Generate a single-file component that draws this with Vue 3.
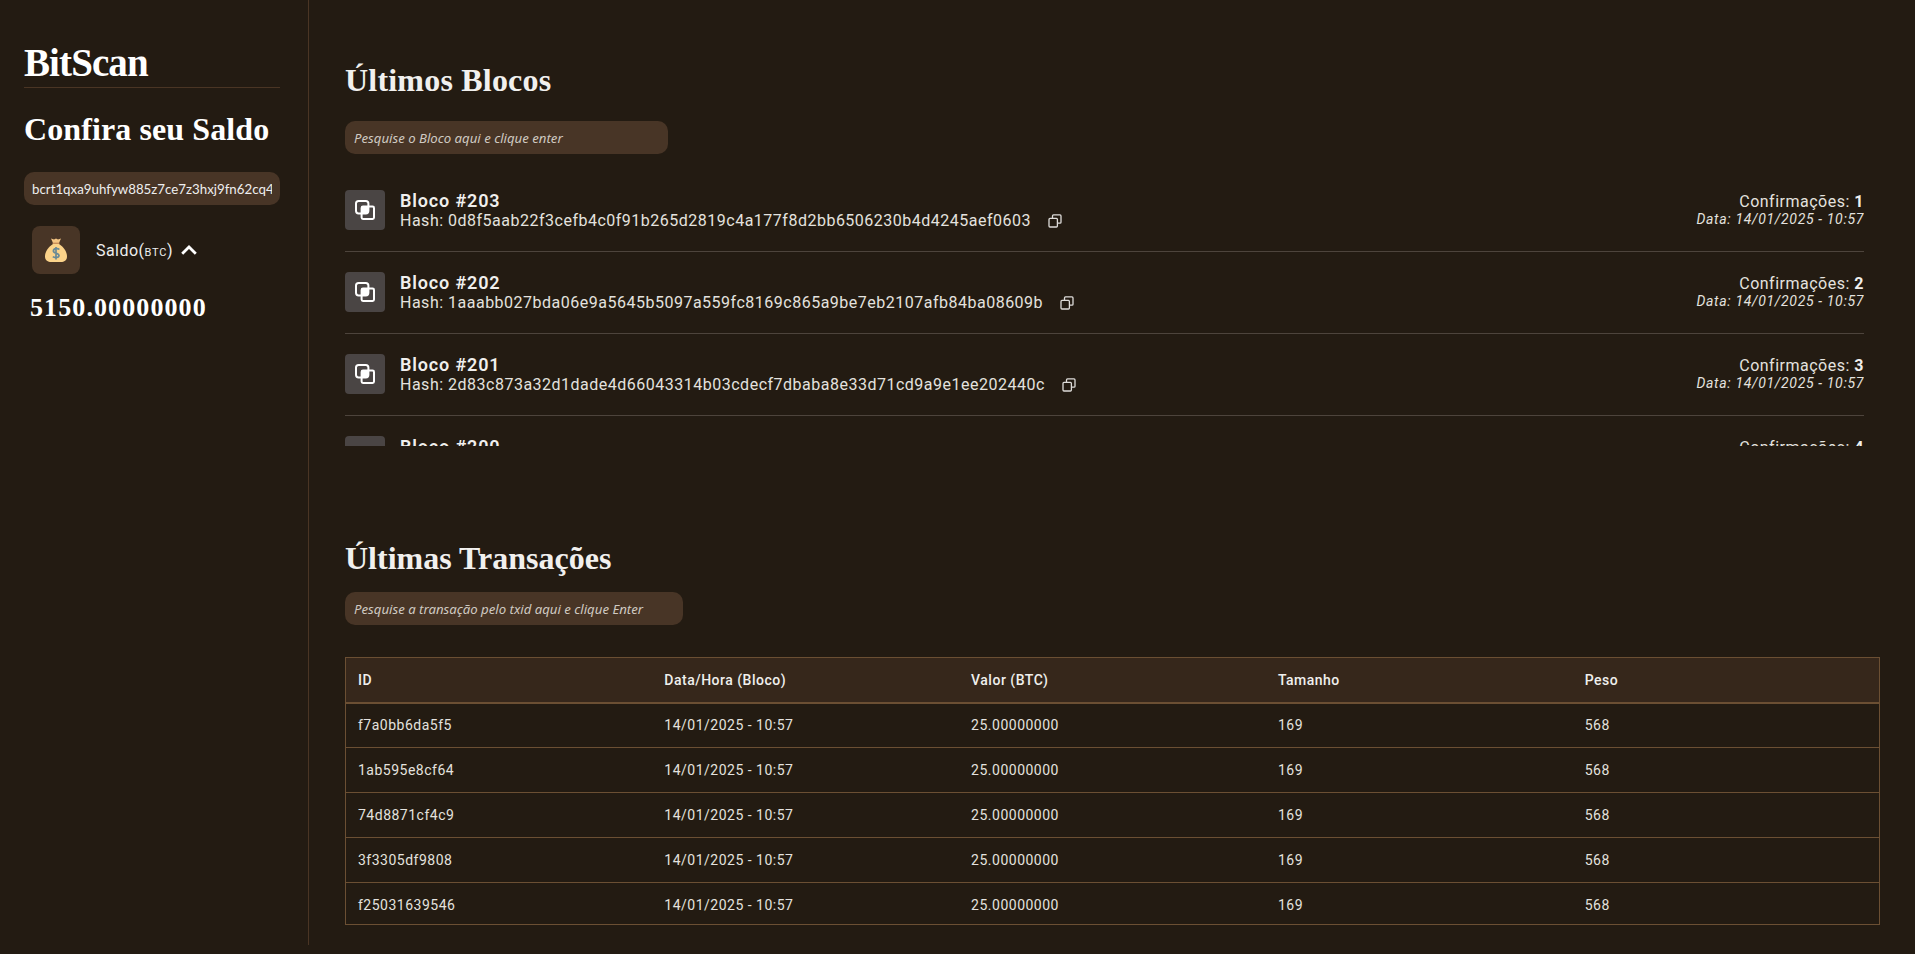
<template>
  <div class="page">
    <!-- sidebar -->
    <aside class="sidebar">
      <h1 class="logo">BitScan</h1>
      <h2 class="side-title">Confira seu Saldo</h2>
      <input class="address" type="text" :value="address" />
      <div class="balance-row">
        <div class="bag-tile">
          <svg width="24" height="26" viewBox="0 0 24 26">
            <path d="M7 1.5 L10 2.6 L12 1.5 L14 2.6 L17 1.5 L15 6 L9 6 Z" fill="#f5c684" />
            <rect x="8.6" y="5.6" width="6.8" height="1.6" fill="#c98f5a" />
            <path d="M9 7 C4 10 1 15 1 19.5 C1 23.5 4 25 7 25 L17 25 C20 25 23 23.5 23 19.5 C23 15 20 10 15 7 Z" fill="#fbd38a" />
            <path d="M15.4 12.5 C14 11.2 9.4 11.2 9.4 14 C9.4 16.8 15 15.6 15 18.6 C15 21 10.6 21 8.8 19.6 M12 10 L12 22.4" fill="none" stroke="#6a8a96" stroke-width="1.7" />
          </svg>
        </div>
        <span class="balance-label">Saldo(<small>BTC</small>)</span>
        <svg class="chevron" width="16" height="16" viewBox="0 0 16 16">
          <path d="M1.2 11.8 L8 5 L14.8 11.8" fill="none" stroke="#fff" stroke-width="2.8" />
        </svg>
      </div>
      <div class="balance-value">5150.00000000</div>
    </aside>

    <main class="content">
      <!-- blocos -->
      <section class="blocks">
        <h2 class="section-title">Últimos Blocos</h2>
        <input class="search" type="text" placeholder="Pesquise o Bloco aqui e clique enter" />
        <div class="block-list">
          <div v-for="b in blocks" :key="b.number" class="block-row">
            <div class="block-icon">
              <svg width="22" height="22" viewBox="0 0 22 22">
                <rect x="2" y="2" width="12.4" height="12.4" rx="2.6" fill="none" stroke="#fff" stroke-width="2" />
                <rect x="7.6" y="7.6" width="12.4" height="12.4" rx="1.4" fill="none" stroke="#fff" stroke-width="2" />
                <rect x="8" y="8" width="6" height="6" fill="#fff" />
              </svg>
            </div>
            <div class="block-main">
              <div class="block-name">Bloco #{{ b.number }}</div>
              <div class="block-hash">
                <span>Hash: {{ b.hash }}</span>
                <svg class="copy" width="14" height="14" viewBox="0 0 14 14">
                  <path d="M4.5 4 V1.9 A1 1 0 0 1 5.5 0.9 H12 A1 1 0 0 1 13 1.9 V8.2 A1 1 0 0 1 12 9.2 H9.6" fill="none" stroke="#dedcd9" stroke-width="1.3" />
                  <rect x="1" y="4.4" width="8.4" height="8.6" rx="1" fill="none" stroke="#dedcd9" stroke-width="1.3" />
                </svg>
              </div>
            </div>
            <div class="block-meta">
              <div class="confirm">Confirmações: <b>{{ b.confirmations }}</b></div>
              <div class="date">Data: 14/01/2025 - 10:57</div>
            </div>
          </div>
        </div>
      </section>

      <!-- transacoes -->
      <section class="transactions">
        <h2 class="section-title">Últimas Transações</h2>
        <input class="search search-tx" type="text" placeholder="Pesquise a transação pelo txid aqui e clique Enter" />
        <table class="tx-table">
          <thead>
            <tr>
              <th>ID</th>
              <th>Data/Hora (Bloco)</th>
              <th>Valor (BTC)</th>
              <th>Tamanho</th>
              <th>Peso</th>
            </tr>
          </thead>
          <tbody>
            <tr v-for="id in txs" :key="id">
              <td>{{ id }}</td>
              <td>14/01/2025 - 10:57</td>
              <td>25.00000000</td>
              <td>169</td>
              <td>568</td>
            </tr>
          </tbody>
        </table>
      </section>
    </main>
  </div>
</template>

<script setup>
const address = 'bcrt1qxa9uhfyw885z7ce7z3hxj9fn62cq45hm8ldy0k'

const blocks = [
  { number: 203, confirmations: 1, hash: '0d8f5aab22f3cefb4c0f91b265d2819c4a177f8d2bb6506230b4d4245aef0603' },
  { number: 202, confirmations: 2, hash: '1aaabb027bda06e9a5645b5097a559fc8169c865a9be7eb2107afb84ba08609b' },
  { number: 201, confirmations: 3, hash: '2d83c873a32d1dade4d66043314b03cdecf7dbaba8e33d71cd9a9e1ee202440c' },
  { number: 200, confirmations: 4, hash: '5e21a7c0f3b94d6688c1e07fa2d35b19c47e80d6f2a1b3947c5d08e6a1f3724b' }
]

const txs = ['f7a0bb6da5f5', '1ab595e8cf64', '74d8871cf4c9', '3f3305df9808', 'f25031639546']
</script>

<style>
body {
  background: #231b12;
}
</style>

<style scoped>
* {
  box-sizing: border-box;
  margin: 0;
}

.page {
  display: flex;
  height: 954px;
  overflow: hidden;
  background: #231b12;
  color: #fff;
  font-family: Roboto, sans-serif;
}

/* sidebar */
.sidebar {
  width: 309px;
  height: 945px;
  flex-shrink: 0;
  padding: 40px 28px 0 24px;
  border-right: 1px solid #4a3524;
}

.logo {
  font-family: "Liberation Serif", serif;
  font-size: 39px;
  line-height: 46px;
  font-weight: 700;
  letter-spacing: -0.9px;
  padding-bottom: 1px;
  border-bottom: 1px solid #4a3524;
}

.side-title {
  font-family: "Liberation Serif", serif;
  font-size: 32px;
  line-height: 40px;
  font-weight: 700;
  margin-top: 21px;
  letter-spacing: 0.1px;
}

.address {
  display: block;
  width: 100%;
  height: 33px;
  margin-top: 23px;
  padding: 0 8px;
  border: none;
  outline: none;
  border-radius: 10px;
  background: #483526;
  color: #eee;
  font-family: Lato, sans-serif;
  font-size: 13.3px;
}

.balance-row {
  display: flex;
  align-items: center;
  margin-top: 21px;
  padding-left: 8px;
}

.bag-tile {
  display: flex;
  align-items: center;
  justify-content: center;
  width: 48px;
  height: 48px;
  border-radius: 8px;
  background: #483526;
}

.balance-label {
  margin-left: 16px;
  font-size: 16px;
  letter-spacing: 0.45px;
  color: #eee;
}

.balance-label small {
  font-size: 11px;
  letter-spacing: 0.8px;
}

.chevron {
  margin-left: 8px;
}

.balance-value {
  margin: 19px 0 0 6px;
  font-family: "Liberation Serif", serif;
  font-size: 26px;
  line-height: 30px;
  font-weight: 700;
  letter-spacing: 1.1px;
}

/* main */
.content {
  flex: 1;
  padding: 0 35px 0 36px;
}

.section-title {
  font-family: "Liberation Serif", serif;
  font-size: 32px;
  line-height: 40px;
  font-weight: 700;
  color: #f1f0ee;
}

.blocks {
  padding-top: 60px;
}

.blocks .section-title {
  letter-spacing: 0.2px;
}

.search {
  display: block;
  width: 323px;
  height: 33px;
  margin-top: 21px;
  padding: 0 9px;
  border: none;
  outline: none;
  border-radius: 10px;
  background: #483526;
  color: #eee;
  font-family: "Noto Sans", sans-serif;
  font-size: 13.2px;
  font-style: italic;
}

.search::placeholder {
  color: #d0cac2;
  opacity: 1;
}

.search-tx {
  width: 338px;
  margin-top: 14px;
}

.block-list {
  height: 292px;
  padding-top: 16px;
  overflow: hidden;
  margin-right: 16px;
}

.block-row {
  display: flex;
  align-items: center;
  height: 82px;
  padding-top: 13px;
  padding-bottom: 14px;
  border-bottom: 1px solid #4d443c;
}

.block-icon {
  display: flex;
  align-items: center;
  justify-content: center;
  width: 40px;
  height: 40px;
  border-radius: 4px;
  background: #4a4544;
}

.block-main {
  margin-left: 15px;
  flex: 1;
}

.block-name {
  font-size: 18px;
  line-height: 21px;
  font-weight: 600;
  letter-spacing: 0.85px;
  color: #f0efed;
}

.block-hash {
  display: flex;
  align-items: center;
  font-size: 16px;
  line-height: 20px;
  letter-spacing: 0.5px;
  color: #e4e2df;
}

.copy {
  margin-left: 17px;
}

.block-meta {
  text-align: right;
  color: #e4e2df;
  letter-spacing: 0.5px;
}

.confirm {
  font-size: 16px;
  line-height: 19px;
}

.confirm b {
  font-weight: 700;
  color: #f0efed;
}

.date {
  font-size: 14px;
  line-height: 17px;
  font-style: italic;
  letter-spacing: 0.66px;
}

.transactions {
  padding-top: 92px;
}

.tx-table {
  width: 100%;
  margin-top: 32px;
  table-layout: fixed;
  border-collapse: collapse;
  border: 1px solid #6b4f33;
  font-size: 14px;
  letter-spacing: 0.5px;
  color: #e4e2df;
}

th {
  height: 45px;
  padding: 0 12px;
  text-align: left;
  font-weight: 500;
  color: #f0efed;
  background: #36271b;
  border-bottom: 2px solid #6b4f33;
}

td {
  height: 45px;
  padding: 0 12px;
  border-bottom: 1px solid #6b4f33;
}

/* last row is cut short, text stays where a full row would have it */
tr:last-child td {
  height: 42px;
  padding-top: 3px;
  padding-bottom: 0;
}
</style>
